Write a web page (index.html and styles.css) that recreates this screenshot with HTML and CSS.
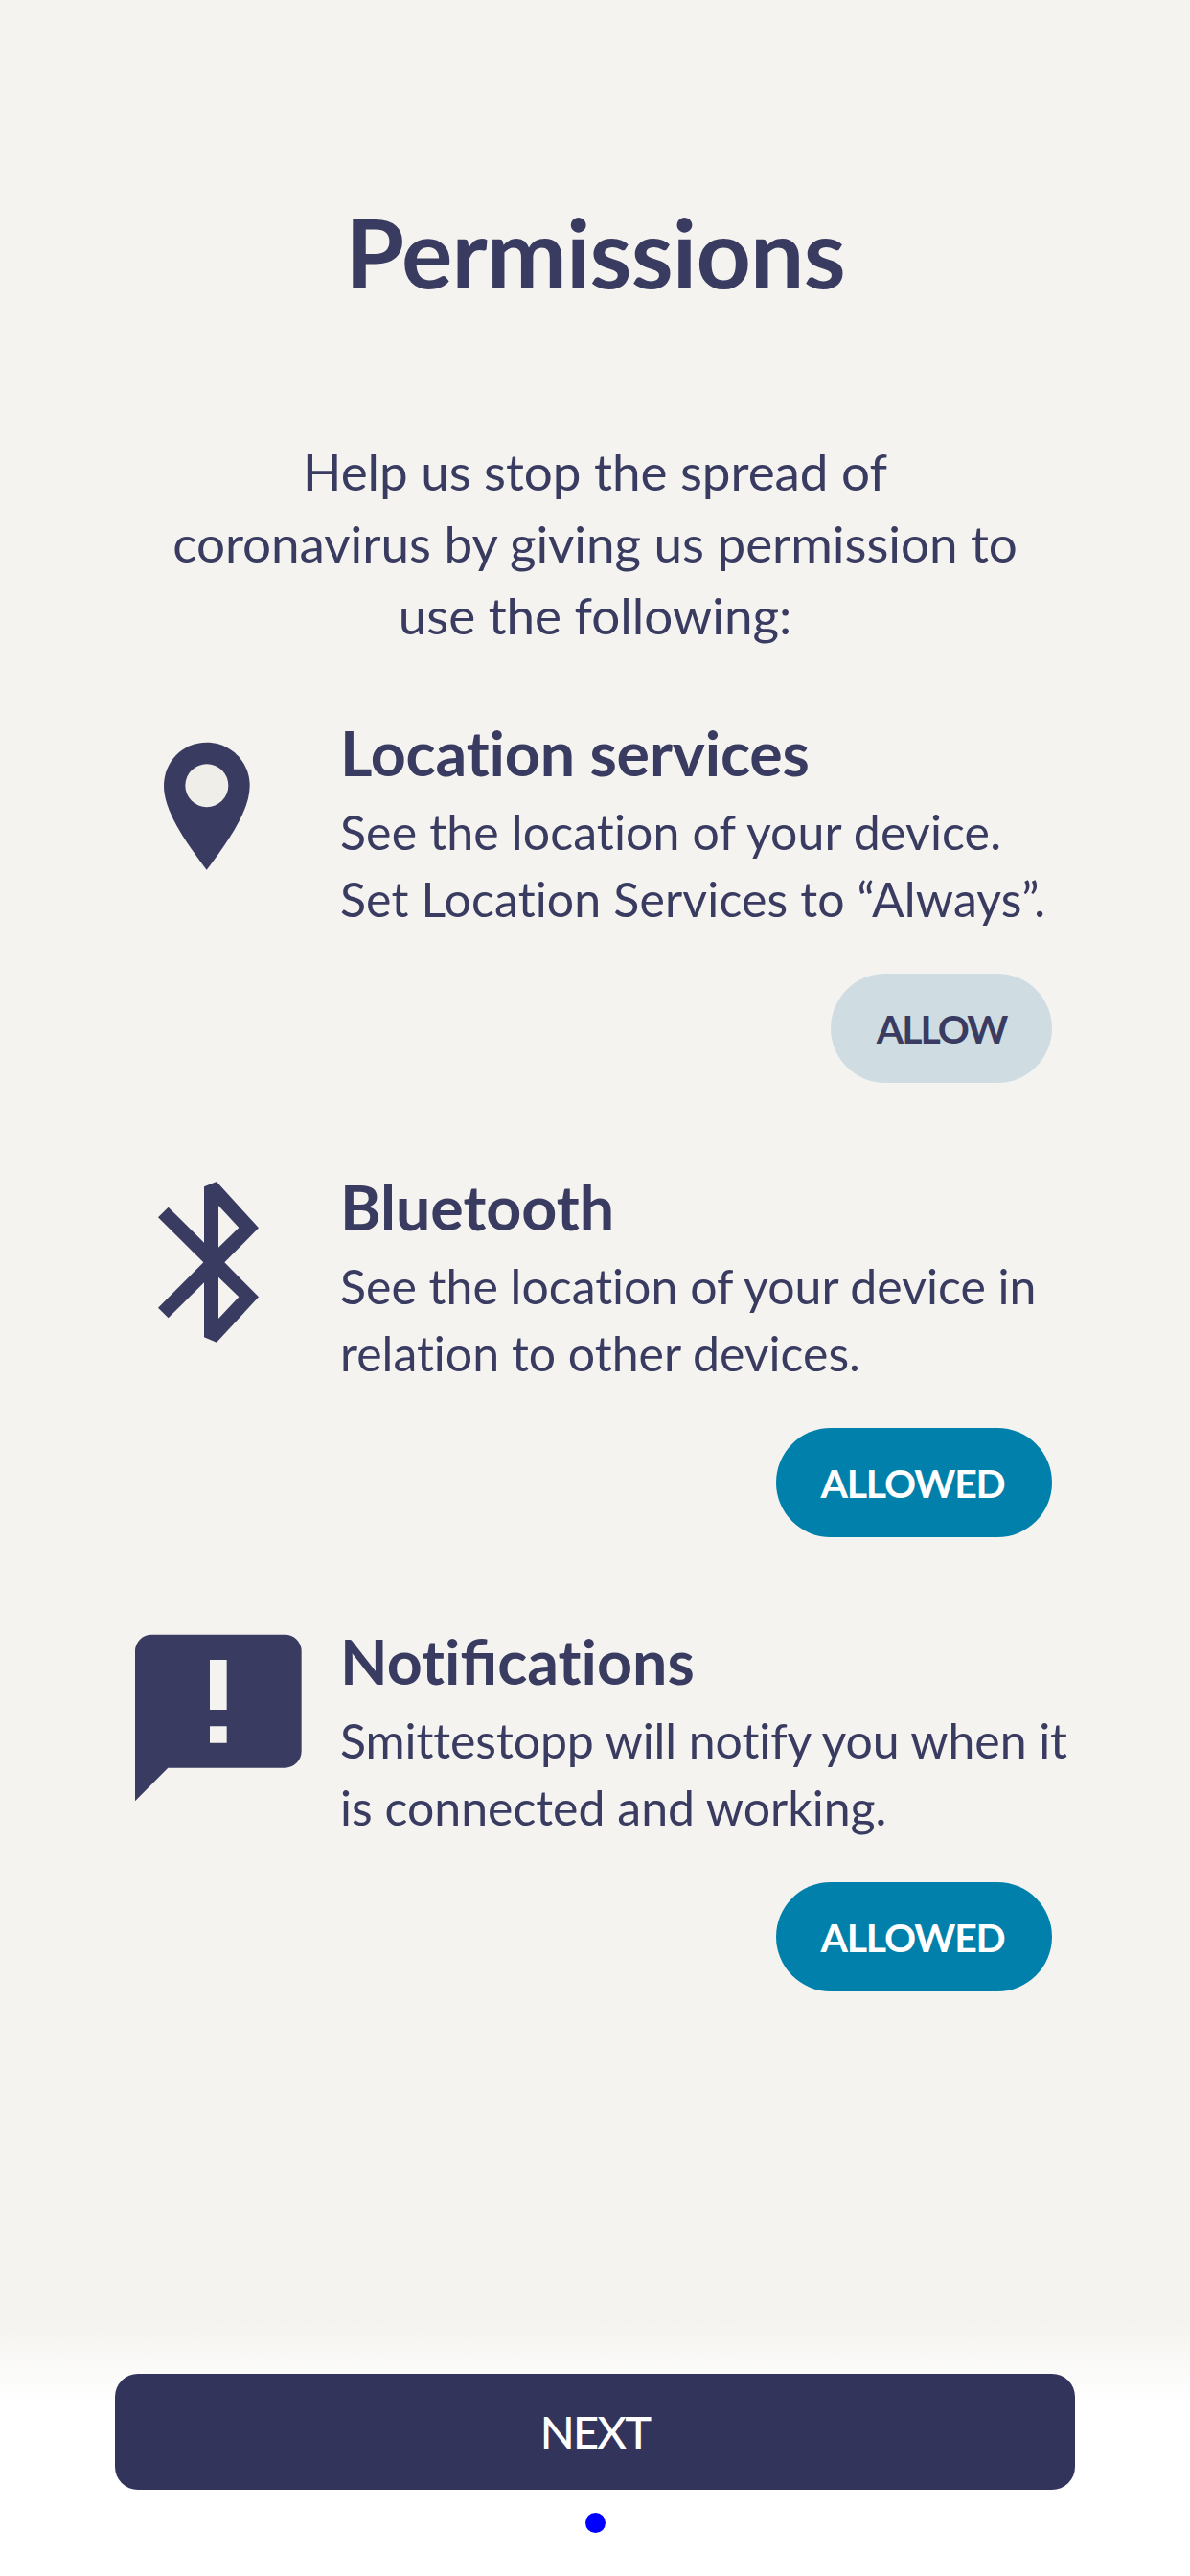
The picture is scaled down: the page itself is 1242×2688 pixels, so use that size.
FILE: index.html
```html
<!DOCTYPE html>
<html lang="en">
<head>
<meta charset="utf-8">
<title>Permissions</title>
<link rel="stylesheet" href="styles.css">
</head>
<body>
<div class="screen">
  <main class="content">
    <h1 class="title">Permissions</h1>
    <p class="intro">Help us stop the spread of<br>coronavirus by giving us permission to<br>use the following:</p>

    <section class="permission">
      <svg class="icon" viewBox="0 18 705 600" aria-hidden="true">
        <path class="shape" d="M287 104C211 104 153 165 153 240C153 315 214 407 287 503C360 407 422 315 422 240C422 165 363 104 287 104Z"/>
        <circle class="pin-hole" cx="287.500" cy="239" r="67.500"/>
      </svg>
      <div class="details">
        <h2 class="name name-tight">Location services</h2>
        <p class="text"><span class="line-wide">See the location of your device.<br>Set Location Services to “Always”.</span></p>
        <button class="pill pill-allow">ALLOW</button>
      </div>
    </section>

    <section class="permission">
      <svg class="icon" viewBox="0 60 705 600" aria-hidden="true">
        <path class="shape" fill-rule="evenodd" d="M279 115L318 99L450 244L343 352L450 460L318 602L279 586V415L167 526L135 494L277 352L135 211L167 179L279 290ZM324 174V305L388 243ZM324 398V528L388 460Z"/>
      </svg>
      <div class="details">
        <h2 class="name">Bluetooth</h2>
        <p class="text">See the location of your device in<br>relation to other devices.</p>
        <button class="pill pill-allowed">ALLOWED</button>
      </div>
    </section>

    <section class="permission">
      <svg class="icon" viewBox="0 42 705 600" aria-hidden="true">
        <path class="shape" fill-rule="evenodd" d="M115 77H532A52 52 0 0 1 584 129V442A52 52 0 0 1 532 494H166L63 598V129A52 52 0 0 1 115 77ZM297 156V312H350V156ZM297 364V416H350V364Z"/>
      </svg>
      <div class="details">
        <h2 class="name">Noti<span class="joined">fi</span>cations</h2>
        <p class="text"><span class="line-tight">Smittestopp will notify you when it</span><br>is connected and working.</p>
        <button class="pill pill-allowed">ALLOWED</button>
      </div>
    </section>
  </main>

  <footer class="footer">
    <button class="next">NEXT</button>
    <span class="page-dot"></span>
  </footer>
</div>
</body>
</html>
```
FILE: styles.css
```css
* {
  box-sizing: border-box;
  margin: 0;
  padding: 0;
}

body {
  background: #f4f3ef;
  color: #393b60;
  font-family: Lato, "Liberation Sans", sans-serif;
  font-variant-ligatures: none;
}

.screen {
  display: flex;
  flex-direction: column;
  width: 1242px;
  height: 2688px;
}

.content {
  flex: 1;
  padding: 202px 120px 0;
}

.title {
  font-size: 100px;
  font-weight: 700;
  line-height: 120px;
  letter-spacing: -0.8px;
  text-align: center;
}

.intro {
  margin-top: 132px;
  margin-bottom: 67px;
  font-size: 53px;
  line-height: 75px;
  letter-spacing: -0.05px;
  text-align: center;
}

.permission {
  display: grid;
  grid-template-columns: 235px 1fr;
  align-items: start;
  margin-bottom: 90px;
}

.icon {
  width: 235px;
  height: 200px;
}

.shape {
  fill: #393b60;
}

.pin-hole {
  fill: #efeee9;
}

.details {
  display: flex;
  flex-direction: column;
}

.name {
  font-size: 64.5px;
  font-weight: 700;
  line-height: 78px;
}

.name-tight {
  letter-spacing: -0.15px;
}

.joined {
  font-variant-ligatures: common-ligatures;
}

.text {
  margin-top: 9px;
  font-size: 50px;
  line-height: 70px;
  white-space: nowrap;
}

.line-wide {
  letter-spacing: 0.14px;
}

.line-tight {
  letter-spacing: -0.08px;
}

.pill {
  align-self: flex-end;
  height: 114px;
  margin-top: 43px;
  margin-right: 24px;
  border: 0;
  border-radius: 57px;
  font-family: inherit;
  font-size: 41px;
  font-weight: 700;
}

.pill-allow {
  width: 231px;
  background: #cfdde3;
  color: #393b60;
  letter-spacing: -2px;
}

.pill-allowed {
  width: 288px;
  padding-right: 3px;
  background: #0080aa;
  color: #fff;
  letter-spacing: -1.2px;
}

.footer {
  display: flex;
  flex-direction: column;
  align-items: center;
  height: 268px;
  padding-top: 57px;
  background: linear-gradient(#f4f3ef 0, #fff 88px);
}

.next {
  width: 1002px;
  height: 121px;
  padding-bottom: 2px;
  border: 0;
  border-radius: 24px;
  background: #33345c;
  color: #fff;
  font-family: inherit;
  font-size: 47px;
  font-weight: 500;
  letter-spacing: -1.8px;
}

.page-dot {
  width: 21px;
  height: 21px;
  margin-top: 24px;
  border-radius: 50%;
  background: #00f;
}
```
